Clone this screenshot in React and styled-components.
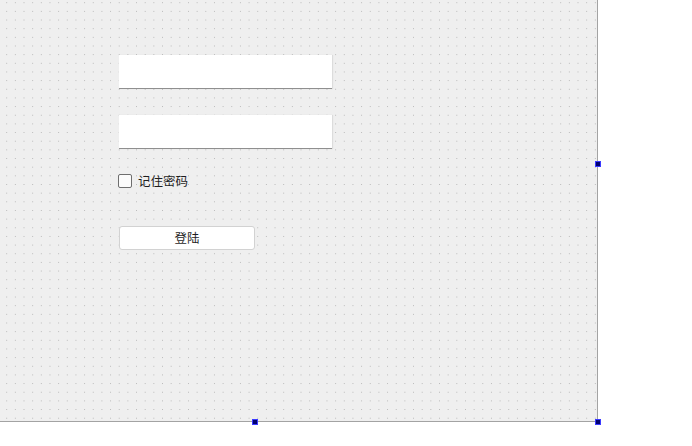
import React from "react";
import styled, { createGlobalStyle } from "styled-components";

const GlobalStyle = createGlobalStyle`
  html, body, #root {
    margin: 0;
    padding: 0;
    height: 100%;
    background: #ffffff;
  }
  body {
    font-family: "Noto Sans CJK SC", "Noto Sans", sans-serif;
  }
`;

const Page = styled.div`
  height: 446px;
  overflow: visible;
`;

const Form = styled.div`
  position: relative;
  box-sizing: border-box;
  width: 598px;
  height: 422px;
  border-right: 1px solid #a3a3a3;
  border-bottom: 1px solid #a3a3a3;
  background-color: #efefef;
  background-image: radial-gradient(circle, #b8b8b8 0.75px, transparent 0.95px);
  background-size: 8.67px 8.67px;
  background-position: 2.37px -1.63px;
  padding: 55px 0 0 119px;
`;

const Column = styled.div`
  display: flex;
  flex-direction: column;
  align-items: flex-start;
`;

const Input = styled.div`
  box-sizing: border-box;
  width: 213px;
  height: 34px;
  background: #ffffff;
  border-bottom: 1px solid #8f8f8f;
  box-shadow: 1px 0 1px rgba(0, 0, 0, 0.08);
  margin-bottom: ${(props) => props.gap || 0}px;
`;

const CheckRow = styled.label`
  display: flex;
  align-items: center;
  gap: 6px;
  height: 14px;
  margin-left: -1px;
  font-size: 12.5px;
  line-height: 14px;
  color: #1e1e1e;
  margin-bottom: 38px;
`;

const CheckLabel = styled.span`
  position: relative;
  top: -0.5px;
`;

const CheckBox = styled.span`
  box-sizing: border-box;
  width: 14px;
  height: 14px;
  border: 1px solid #6e6e6e;
  border-radius: 2px;
  background: #fbfbfb;
`;

const Button = styled.div`
  box-sizing: border-box;
  width: 136px;
  height: 24px;
  background: #ffffff;
  border: 1px solid #d2d2d2;
  border-radius: 3px;
  display: flex;
  align-items: center;
  justify-content: center;
  font-size: 12.5px;
  line-height: 14px;
  color: #1e1e1e;
  padding-bottom: 1px;
`;

const Handle = styled.span`
  position: absolute;
  box-sizing: border-box;
  width: 6px;
  height: 6px;
  background: #000070;
  border: 1px solid #3a3aff;
  left: ${(props) => props.x}px;
  top: ${(props) => props.y}px;
`;

export default function App() {
  return (
    <Page>
      <GlobalStyle />
      <Form>
        <Column>
          <Input gap={26} />
          <Input gap={25} />
          <CheckRow>
            <CheckBox />
            <CheckLabel>记住密码</CheckLabel>
          </CheckRow>
          <Button>登陆</Button>
        </Column>
        <Handle x={595} y={161} />
        <Handle x={252} y={419} />
        <Handle x={595} y={419} />
      </Form>
    </Page>
  );
}
